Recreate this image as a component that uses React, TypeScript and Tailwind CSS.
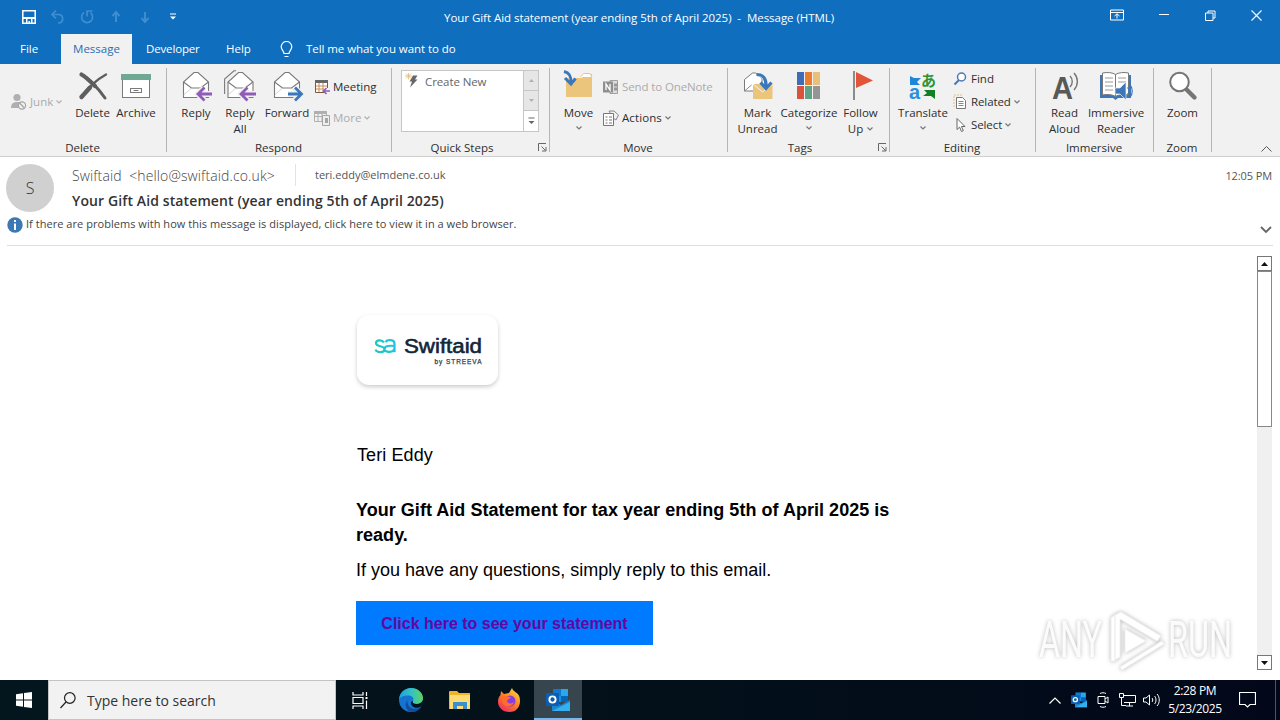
import type { ReactNode } from "react";

function EnvelopeShape() {
  return (
    <g fill="#fff" stroke="#7a7a7a" strokeWidth="1.1">
      <path d="M2.5 12v15.500h25V12L17 2.500h-4z" />
      <path d="M2.500 12l8 6h9l8-6" fill="none" />
      <path d="M10.500 18l-8 7M19.500 18l4 3" fill="none" stroke="#b5b5b5" strokeWidth="0.6" />
    </g>
  );
}

function ReplyIcon() {
  return (
    <svg width="32" height="32" viewBox="0 0 32 32" className="translate-x-px">
      <EnvelopeShape />
      <path d="M30.500 24H17M23 18l-6 6 6 6" fill="none" stroke="#f1f1f1" strokeWidth="6" />
      <path d="M31 24H17M23.500 17.500L17 24l6.500 6.500" fill="none" stroke="#8f5db7" strokeWidth="2.800" />
    </svg>
  );
}

function ReplyAllIcon() {
  return (
    <svg width="32" height="32" viewBox="0 0 32 32">
      <path d="M.6 24V9L10 .8h2" fill="none" stroke="#7a7a7a" strokeWidth="1.1" />
      <g transform="translate(1.500 0)">
        <EnvelopeShape />
      </g>
      <path d="M31 24H17M23 18l-6 6 6 6" fill="none" stroke="#f1f1f1" strokeWidth="6" />
      <path d="M32 24H17M23.500 17.500L17 24l6.500 6.500" fill="none" stroke="#8f5db7" strokeWidth="2.800" />
    </svg>
  );
}

function ForwardIcon() {
  return (
    <svg width="32" height="32" viewBox="0 0 32 32" className="translate-x-px">
      <EnvelopeShape />
      <path d="M16 24h13M23 18l6 6-6 6" fill="none" stroke="#f1f1f1" strokeWidth="6" />
      <path d="M16 24h13.500M23 17.500l6.500 6.500-6.500 6.500" fill="none" stroke="#3a78bb" strokeWidth="2.800" />
    </svg>
  );
}

function DeleteIcon() {
  return (
    <svg width="32" height="32" viewBox="0 0 32 32">
      <path d="M4.500 4.500C12 9 21 18 28 28" fill="none" stroke="#5e5e5e" strokeWidth="3" strokeLinecap="round" />
      <path d="M4.500 4.500C9 7 14 12 18 16" fill="none" stroke="#5e5e5e" strokeWidth="4.200" strokeLinecap="round" />
      <path d="M29 4.500C19 10 11 18 4.500 27" fill="none" stroke="#5e5e5e" strokeWidth="2.400" strokeLinecap="round" />
      <path d="M13 17.500L4.500 27" fill="none" stroke="#5e5e5e" strokeWidth="4.400" strokeLinecap="round" />
    </svg>
  );
}

function ArchiveIcon() {
  return (
    <svg width="32" height="32" viewBox="0 0 32 32">
      <rect x="2.500" y="9.500" width="27" height="18" fill="#fff" stroke="#7a7a7a" />
      <rect x="1" y="4" width="30" height="6" fill="#6fa994" />
      <rect x="10.500" y="18.500" width="11" height="4" fill="#fff" stroke="#7a7a7a" />
      <path d="M13.500 20.500h5" stroke="#7a7a7a" />
    </svg>
  );
}

function MoveIcon() {
  return (
    <svg width="32" height="32" viewBox="0 0 32 32">
      <path d="M3 8h16l3-4h7v23H3z" fill="#ebc57b" />
      <path d="M17.500 7l3-3.500H27L29 7" fill="#fff" stroke="#ebc57b" />
      <path d="M1 .5c5 1 8 4 7.500 13" fill="none" stroke="#f1f1f1" strokeWidth="5" />
      <path d="M1 1.500c5 1 7.500 4 7 12M2 8l6 6 4.500-5.500" fill="none" stroke="#3a78bb" strokeWidth="3" />
    </svg>
  );
}

function MarkUnreadIcon() {
  return (
    <svg width="32" height="32" viewBox="0 0 32 32">
      <path d="M2.500 21V9.500L10.500 3h3L20 8v13z" fill="#fff" stroke="#7a7a7a" />
      <path d="M2.500 21l7-6" stroke="#8a8a8a" fill="none" />
      <rect x="11" y="14" width="19.500" height="15" fill="#ebc57b" />
      <path d="M11 14l9.500 8 10-8" fill="none" stroke="#fff" strokeWidth="0.8" />
      <path d="M15 4c7 0 10 4 9.500 14" fill="none" stroke="#f1f1f1" strokeWidth="5" />
      <path d="M14.500 4.500c7 0 10 4 9.500 13M18.500 12.500l5.500 6 5.500-6" fill="none" stroke="#3a78bb" strokeWidth="3.200" />
    </svg>
  );
}

function CategorizeIcon() {
  return (
    <svg width="32" height="32" viewBox="0 0 32 32">
      <rect x="4" y="2" width="7" height="13" fill="#3e6db5" />
      <rect x="12" y="2" width="7" height="13" fill="#ea7d2f" />
      <rect x="20" y="2" width="7" height="13" fill="#e8c07a" />
      <rect x="4" y="16" width="7" height="13" fill="#d9533c" />
      <rect x="12" y="16" width="7" height="13" fill="#5fa387" />
      <rect x="20" y="16" width="7" height="13" fill="#959595" />
    </svg>
  );
}

function FlagIcon() {
  return (
    <svg width="32" height="32" viewBox="0 0 32 32">
      <path d="M9 1v29" stroke="#808080" strokeWidth="1.800" />
      <path d="M11 2l17 8.500L11 18z" fill="#e2553b" />
    </svg>
  );
}

function TranslateIcon() {
  return (
    <svg width="32" height="32" viewBox="0 0 32 32" className="overflow-visible">
      <path d="M3 6l4 2h7l-4 4 3 3H3z" fill="#1f87d8" />
      <path d="M28 29l-4-3h-8l4-3-3-3h11z" fill="#118023" />
      <text x="2" y="28.500" fontSize="20" fontWeight="700" fill="#2b8fdc" className="font-['Liberation_Sans']">a</text>
      <text x="14" y="15.500" fontSize="15" fontWeight="700" fill="#2f9133" className="font-['Noto_Sans_CJK_JP']">あ</text>
    </svg>
  );
}

function ReadAloudIcon() {
  return (
    <svg width="32" height="32" viewBox="0 0 32 32" className="overflow-visible">
      <text x="3" y="29" fontSize="32" fontWeight="700" fill="#595959" className="font-['Liberation_Sans']" textLength="21" lengthAdjust="spacingAndGlyphs">A</text>
      <path d="M21 6c3 3 3 8 0 11M25 3c4.500 5 4.500 12 0 17" fill="none" stroke="#777" strokeWidth="1.400" />
    </svg>
  );
}

function ReaderIcon() {
  return (
    <svg width="34" height="32" viewBox="0 0 34 32">
      <path d="M1 5h31v23H19l-2.500 2-2.500-2H1z" fill="#3a78bb" />
      <path d="M3.500 3c5-1 10-.5 13 1.500C19.500 2.500 25 2 29.500 3v22c-5-1-10-.5-13 1.500-3-2-8-2.500-13-1.500z" fill="#fff" stroke="#777" />
      <path d="M16.500 4.500v22" stroke="#777" />
      <path d="M6 8h8M6 12h8M6 16h8M6 20h8M19 8h8M19 12h8" stroke="#999" />
      <path d="M16 18h5l6-6v18l-6-6h-5z" fill="#3a78bb" stroke="#f1f1f1" strokeWidth="0.7" />
      <path d="M28.500 17.500c2 2 2 5 0 7M31 15c3 3 3 9 0 12" fill="none" stroke="#3a78bb" strokeWidth="1.200" />
    </svg>
  );
}

function ZoomIcon() {
  return (
    <svg width="32" height="32" viewBox="0 0 32 32">
      <path d="M18.500 18.500l9 9" stroke="#757575" strokeWidth="4.400" strokeLinecap="round" />
      <circle cx="12.500" cy="12" r="9.300" fill="#fff" stroke="#757575" strokeWidth="2" />
    </svg>
  );
}

function Caret({ color = "#777" }: { color?: string }) {
  return (
    <svg width="6" height="4" viewBox="0 0 6 4" className="shrink-0">
      <path d="M.5.5L3 3 5.500.5" fill="none" stroke={color} strokeWidth="1.200" />
    </svg>
  );
}

function Launcher() {
  return (
    <svg width="9" height="9" viewBox="0 0 9 9" className="absolute right-[3px] bottom-1">
      <path d="M.5 8V.5H8M3.500 3.500l4 4M8 4v4H4" fill="none" stroke="#666" />
    </svg>
  );
}

type GroupProps = { label: string; width: string; launcher?: boolean; children: ReactNode };

function Group({ label, width, launcher, children }: GroupProps) {
  return (
    <div className={`relative flex shrink-0 flex-col ${width}`}>
      <div className="flex h-[76px] pt-1.5">{children}</div>
      <div className={`text-center leading-4 ${launcher ? "pr-[18px]" : "pr-0.5"}`}>{label}</div>
      {launcher && <Launcher />}
      <div className="absolute top-1 right-0 h-[84px] w-px bg-[#b5b5b5]" />
    </div>
  );
}

type BigButtonProps = { icon: ReactNode; lines: string[]; width: string; caret?: "below" | "inline" };

function BigButton({ icon, lines, width, caret }: BigButtonProps) {
  return (
    <button className={`flex shrink-0 flex-col items-center ${width}`}>
      <span className="flex h-[35px]">{icon}</span>
      {lines.map((line, i) => (
        <span key={line} className="flex items-center gap-1 leading-4 whitespace-nowrap">
          {line}
          {caret === "inline" && i === lines.length - 1 && <Caret />}
        </span>
      ))}
      {caret === "below" && (
        <span className="mt-[5px]">
          <Caret />
        </span>
      )}
    </button>
  );
}

type SmallButtonProps = { icon: ReactNode; label: string; caret?: boolean; disabled?: boolean; track?: string };

function SmallButton({ icon, label, caret, disabled, track = "" }: SmallButtonProps) {
  return (
    <button className={`flex h-[23px] items-center gap-[3px] whitespace-nowrap ${disabled ? "text-[#ababab]" : ""} ${track}`}>
      {icon}
      <span>{label}</span>
      {caret && <Caret color={disabled ? "#b0b0b0" : "#777"} />}
    </button>
  );
}

function TitleBar() {
  return (
    <div className="flex h-[34px] items-center">
      <div className="flex w-[444px] items-center pl-[22px]">
        <svg width="14" height="14" viewBox="0 0 14 14">
          <path d="M.8.800h12.400v12.400H.8z" fill="none" stroke="#fff" strokeWidth="1.500" />
          <path d="M0 7h14v2H0zM4 9h1.500v5H4zM9 9h1.500v5H9zM6.500 11H8v3H6.500z" fill="#fff" />
        </svg>
        <svg width="16" height="16" viewBox="0 0 16 16" className="ml-[14px]">
          <path d="M6 1.500L2 5.500l4 4M2 5.500h7a4.300 4.300 0 0 1 0 8.500H8" fill="none" stroke="#408ecf" strokeWidth="1.700" />
        </svg>
        <svg width="16" height="16" viewBox="0 0 16 16" className="ml-[13px]">
          <path d="M5 3.500a5.500 5.500 0 1 0 6.500.2M8 7.500V2h5.500" fill="none" stroke="#408ecf" strokeWidth="1.700" />
        </svg>
        <svg width="12" height="16" viewBox="0 0 12 16" className="ml-[15px]">
          <path d="M6 13V3M2.500 7L6 3l3.500 4" fill="none" stroke="#408ecf" strokeWidth="1.900" />
        </svg>
        <svg width="12" height="16" viewBox="0 0 12 16" className="ml-[17px]">
          <path d="M6 3v10M2.500 9L6 13l3.500-4" fill="none" stroke="#408ecf" strokeWidth="1.900" />
        </svg>
        <svg width="8" height="8" viewBox="0 0 8 8" className="ml-[18px]">
          <path d="M1 1h6" stroke="#fff" />
          <path d="M1 3.500h6L4 6.500z" fill="#fff" />
        </svg>
      </div>
      <div className="w-[392px] pt-0.5 tracking-[-0.04px] whitespace-pre text-white">
        {"Your Gift Aid statement (year ending 5th of April 2025)  -  Message (HTML)"}
      </div>
      <div className="ml-auto flex items-center pr-[18px] pb-1">
        <svg width="14" height="12" viewBox="0 0 14 12">
          <path d="M.5 1h13v10H.5zM.5 3.500h13M7 9.500V5M4.500 7L7 4.800 9.500 7" fill="none" stroke="#fff" />
        </svg>
        <svg width="10" height="10" viewBox="0 0 10 10" className="ml-[35px]">
          <path d="M0 4.500h10" stroke="#fff" />
        </svg>
        <svg width="11" height="11" viewBox="0 0 11 11" className="ml-[36px]">
          <path d="M.5 3h7.500v7.500H.5zM3 3V1h7v7H8" fill="none" stroke="#fff" />
        </svg>
        <svg width="11" height="11" viewBox="0 0 11 11" className="ml-[35px]">
          <path d="M.5.5l10 10M10.500.5l-10 10" stroke="#fff" strokeWidth="1.100" />
        </svg>
      </div>
    </div>
  );
}

function TabRow() {
  return (
    <div className="flex h-[30px] items-center text-white">
      <span className="w-[61px] pl-5">File</span>
      <span className="flex h-full w-[71px] items-center justify-center bg-[#f1f1f1] text-[#2b6cb0]">Message</span>
      <span className="w-[94px] pl-3.5 tracking-[-0.15px]">Developer</span>
      <span className="w-[54px]">Help</span>
      <svg width="13" height="17" viewBox="0 0 13 17">
        <path d="M4 12.500C4 10 1.200 9 1.200 5.800a5.300 5.300 0 0 1 10.600 0C11.800 9 9 10 9 12.500zM4.500 15.500h4" fill="none" stroke="#fff" strokeWidth="1.200" />
      </svg>
      <span className="pl-[13px] tracking-[-0.06px]">Tell me what you want to do</span>
    </div>
  );
}

function Ribbon() {
  return (
    <div className="flex h-[93px] border-b border-[#cfcfcf] bg-[#f1f1f1] text-[#2e2e2e]">
      <Group label="Delete" width="w-[167px]">
        <div className="flex w-[70px] pt-5 pl-2.5">
          <SmallButton
            disabled
            caret
            label="Junk"
            icon={
              <svg width="17" height="17" viewBox="0 0 17 17">
                <circle cx="7" cy="4.500" r="3.600" fill="#b0b0b0" />
                <path d="M1 15c0-4 2-6 6-6s4 1 5 2v4z" fill="#b0b0b0" />
                <circle cx="12" cy="12.500" r="3.600" fill="#f1f1f1" stroke="#a5a5a5" strokeWidth="1.200" />
                <path d="M9.500 10l5 5" stroke="#a5a5a5" strokeWidth="1.200" />
              </svg>
            }
          />
        </div>
        <BigButton width="w-[45px]" icon={<DeleteIcon />} lines={["Delete"]} />
        <BigButton width="w-[42px]" icon={<ArchiveIcon />} lines={["Archive"]} />
      </Group>

      <Group label="Respond" width="w-[225px]">
        <div className="w-[7px]" />
        <BigButton width="w-[44px]" icon={<ReplyIcon />} lines={["Reply"]} />
        <BigButton width="w-[44px]" icon={<ReplyAllIcon />} lines={["Reply", "All"]} />
        <BigButton width="w-[50px]" icon={<ForwardIcon />} lines={["Forward"]} />
        <div className="flex flex-col gap-2 pt-[5px] pl-0.5">
          <SmallButton
            label="Meeting"
            icon={
              <svg width="16" height="16" viewBox="0 0 16 16">
                <path d="M1.500 3.500h12v10h-12z" fill="#fff" stroke="#7a5a3a" />
                <path d="M1 1h13v3H1z" fill="#666" />
                <path d="M2 7h11M2 10h8M5 4v9M9 4v9" stroke="#cc8b52" />
                <path d="M10 9h6v7h-6z" fill="#f1f1f1" />
                <path d="M16 12h-6M12.500 9l-3 3 3 3" fill="none" stroke="#8f5db7" strokeWidth="1.600" />
              </svg>
            }
          />
          <SmallButton
            disabled
            caret
            label="More"
            icon={
              <svg width="16" height="16" viewBox="0 0 16 16">
                <path d="M.5 3.500h12v8H.5zM.5 6.500h12M4 3v8M8 3v8" fill="none" stroke="#b0b0b0" />
                <path d="M0 1h13v3H0z" fill="#b0b0b0" />
                <path d="M8.500 5.500h7v10h-7z" fill="#eee" stroke="#a5a5a5" />
                <path d="M11 8h3v5h-3z" fill="#a5a5a5" />
              </svg>
            }
          />
        </div>
      </Group>

      <Group label="Quick Steps" width="w-[158px]" launcher>
        <div className="ml-[9px] flex h-[62px] w-[138px] border border-[#c6c6c6] bg-white">
          <div className="flex grow items-start gap-1.5 pt-0.5 pl-[3px] text-[#666]">
            <svg width="14" height="16" viewBox="0 0 14 16">
              <path d="M8 2.500h4.500L10 6.500h2.500L5 14.500l2-6H4.500z" fill="#666" />
              <path d="M3.500-.5v7M0 3h7M1 .5l5 5M6 .5l-5 5" stroke="#e5b876" strokeWidth="0.8" />
            </svg>
            <span className="tracking-[-0.1px]">Create New</span>
          </div>
          <div className="flex w-[15px] flex-col border-l border-[#c6c6c6]">
            <span className="flex h-5 items-center justify-center border-b border-[#c6c6c6] bg-[#e6e6e6]">
              <svg width="5" height="3" viewBox="0 0 5 3"><path d="M0 3L2.500 0 5 3z" fill="#b0b0b0" /></svg>
            </span>
            <span className="flex h-5 items-center justify-center border-b border-[#c6c6c6] bg-[#e6e6e6]">
              <svg width="5" height="3" viewBox="0 0 5 3"><path d="M0 0l2.500 3L5 0z" fill="#b0b0b0" /></svg>
            </span>
            <span className="flex h-5 items-center justify-center bg-white">
              <svg width="7" height="8" viewBox="0 0 7 8"><path d="M.5.500h6v1h-6zM.5 4h6l-3 3z" fill="#666" /></svg>
            </span>
          </div>
        </div>
      </Group>

      <Group label="Move" width="w-[178px]">
        <BigButton width="w-[57px]" icon={<MoveIcon />} lines={["Move"]} caret="below" />
        <div className="flex flex-col gap-2 pt-[5px]">
          <SmallButton
            disabled
            label="Send to OneNote"
            track="tracking-[-0.12px]"
            icon={
              <svg width="16" height="16" viewBox="0 0 16 16" className="-ml-1">
                <path d="M7 1.500h7.500v13H7z" fill="#ddd" stroke="#a0a0a0" />
                <path d="M11 4.500h4v3h-4zM11 8.500h4v3h-4z" fill="#999" />
                <path d="M0 2.500h10v11H0z" fill="#8f8f8f" />
                <path d="M3 11V5l4 6V5" fill="none" stroke="#fff" strokeWidth="1.300" />
              </svg>
            }
          />
          <SmallButton
            caret
            label="Actions"
            track="tracking-[0.1px]"
            icon={
              <svg width="16" height="16" viewBox="0 0 16 16" className="-ml-1">
                <path d="M6 1h5l4.500 4-2.500 5-3-2z" fill="#f1f1f1" stroke="#888" />
                <path d="M.5 3.500h10v12H.5z" fill="#fff" stroke="#777" />
                <path d="M2.500 7h2M6 7h3M2.500 10h2M6 10h3M2.500 13h2M6 13h3" stroke="#777" />
              </svg>
            }
          />
        </div>
      </Group>

      <Group label="Tags" width="w-[162px]" launcher>
        <div className="w-[7px]" />
        <BigButton width="w-[45px]" icon={<MarkUnreadIcon />} lines={["Mark", "Unread"]} />
        <BigButton width="w-[58px]" icon={<CategorizeIcon />} lines={["Categorize"]} caret="below" />
        <BigButton width="w-[45px]" icon={<FlagIcon />} lines={["Follow", "Up"]} caret="inline" />
      </Group>

      <Group label="Editing" width="w-[146px]">
        <div className="w-[5px]" />
        <BigButton width="w-[56px]" icon={<TranslateIcon />} lines={["Translate"]} caret="below" />
        <div className="-mt-[3px] flex flex-col pl-0.5">
          <SmallButton
            label="Find"
            icon={
              <svg width="15" height="16" viewBox="0 0 15 16">
                <path d="M6 9l-4.500 4.500" stroke="#4a7ab5" strokeWidth="2.200" />
                <circle cx="8.500" cy="6" r="4" fill="#fff" stroke="#4a7ab5" strokeWidth="1.500" />
              </svg>
            }
          />
          <SmallButton
            caret
            label="Related"
            track="tracking-[-0.1px]"
            icon={
              <svg width="15" height="16" viewBox="0 0 15 16">
                <path d="M1 13V1h8" fill="none" stroke="#e8c07a" strokeDasharray="2 1" />
                <path d="M3.500 3.500h6l3 3v8h-9z" fill="#fff" stroke="#777" />
                <path d="M5.500 7.500h5M5.500 9.500h5M5.500 11.500h5" stroke="#888" />
              </svg>
            }
          />
          <SmallButton
            caret
            label="Select"
            track="tracking-[-0.1px]"
            icon={
              <svg width="15" height="16" viewBox="0 0 15 16">
                <path d="M4 1.500v11l2.600-2.400L8.500 14.500l1.800-.8-1.800-4.200H12z" fill="#fff" stroke="#666" />
              </svg>
            }
          />
        </div>
      </Group>

      <Group label="Immersive" width="w-[118px]">
        <BigButton width="w-[57px]" icon={<ReadAloudIcon />} lines={["Read", "Aloud"]} />
        <BigButton width="w-[46px]" icon={<ReaderIcon />} lines={["Immersive", "Reader"]} />
      </Group>

      <Group label="Zoom" width="w-[58px]">
        <BigButton width="w-[57px]" icon={<ZoomIcon />} lines={["Zoom"]} />
      </Group>

      <div className="flex grow items-end justify-end pr-2 pb-1">
        <svg width="11" height="6" viewBox="0 0 11 6">
          <path d="M.5 5.500l5-5 5 5" fill="none" stroke="#555" />
        </svg>
      </div>
    </div>
  );
}

function MessageHeader() {
  return (
    <div className="mr-[7px] ml-[7px] flex h-[89px] flex-col border-b border-[#dedede] text-[#444]">
      <div className="-ml-px flex h-[58px] pt-[7px]">
        <div className="flex size-12 items-center justify-center rounded-full bg-[#d0d0d0] text-base font-light text-[#333]">S</div>
        <div className="ml-[18px] flex flex-col">
          <div className="flex h-[22px] items-center">
            <span className="w-[223px] text-[14px] font-light tracking-[0.12px] whitespace-pre text-[#444]">{"Swiftaid  <hello@swiftaid.co.uk>"}</span>
            <span className="h-[22px] w-px bg-[#e3e3e3]" />
            <span className="pl-[19px] text-[11px] text-[#555]">teri.eddy@elmdene.co.uk</span>
          </div>
          <div className="mt-[5px] text-[14px] leading-5 font-semibold tracking-[0.11px] whitespace-nowrap text-[#333]">
            Your Gift Aid statement (year ending 5th of April 2025)
          </div>
        </div>
        <span className="mt-0.5 mr-px ml-auto text-[11px] leading-5 tracking-[-0.1px] text-[#555]">12:05 PM</span>
      </div>
      <div className="flex h-[19px] items-center gap-[3px] text-[11px] tracking-[0.04px]">
        <svg width="16" height="16" viewBox="0 0 16 16">
          <circle cx="8" cy="8" r="7.700" fill="#3c78b4" />
          <path d="M8 3v2M8 6.500V13" stroke="#fff" strokeWidth="2" />
        </svg>
        <span>If there are problems with how this message is displayed, click here to view it in a web browser.</span>
        <svg width="12" height="8" viewBox="0 0 12 8" className="mt-2.5 mr-px ml-auto">
          <path d="M1 1l5 5 5-5" fill="none" stroke="#666" strokeWidth="1.800" />
        </svg>
      </div>
    </div>
  );
}

function Logo() {
  return (
    <div className="flex h-[70px] w-[141px] items-center justify-center rounded-xl bg-white shadow-[0_2px_4px_rgba(0,0,0,0.2)]">
      <svg width="110" height="34" viewBox="0 0 110 34" className="font-['Liberation_Sans']">
        <defs>
          <linearGradient id="sa" x1="0" x2="1">
            <stop offset="0" stopColor="#1cc8c0" />
            <stop offset="1" stopColor="#22c3e0" />
          </linearGradient>
        </defs>
        <path d="M11 9.500C9 6.500 3 6.800 3 10.300c0 3.900 8.500 2 8.500 5.900 0 3.800-7.500 3.800-9 .4M12.500 9c2-2.800 9-2.600 9 1.500v8.700M21.500 13c-4-.5-10-.5-10 3.200 0 4 10 3.500 10-1.300" fill="none" stroke="url(#sa)" strokeWidth="2.200" />
        <text x="31" y="19.500" fontSize="20" fill="#12263a" stroke="#12263a" strokeWidth="0.600" textLength="78" lengthAdjust="spacingAndGlyphs">Swiftaid</text>
        <text x="61.500" y="30.500" fontSize="6.500" fill="#333f4d" stroke="#333f4d" strokeWidth="0.250" textLength="47">by STREEVA</text>
      </svg>
    </div>
  );
}

function Watermark() {
  return (
    <div className="absolute right-[43px] bottom-[7px] drop-shadow-[0_0_2px_rgba(0,0,0,0.3)]">
      <svg width="200" height="66" viewBox="0 0 200 66" className="font-['Roboto']">
        <g fill="#fff" fillOpacity="0.9">
          <text x="2" y="50" fontSize="50" textLength="63" lengthAdjust="spacingAndGlyphs">ANY</text>
          <text x="131" y="50" fontSize="50" textLength="64" lengthAdjust="spacingAndGlyphs">RUN</text>
        </g>
        <path d="M74 54V11l4-3v46zM84 5l40 24-4 5-37-22v38l-5 3V8zM83 60l42-26 2 3-42 26zM88 22v24l21-12z" fill="#fff" stroke="#f0f0f0" />
      </svg>
    </div>
  );
}

function MessageBody() {
  return (
    <div className="relative flex h-[434px] justify-between pt-2.5 pr-2 pb-2.5 font-['Liberation_Sans',sans-serif] text-black">
      <div className="ml-[356px] flex w-[560px] flex-col items-start text-[18px] leading-[25px]">
        <div className="mt-[59px] ml-px">
          <Logo />
        </div>
        <p className="mt-[58px] ml-px tracking-[0.1px]">Teri Eddy</p>
        <p className="mt-[30px] font-bold tracking-[0.03px] whitespace-nowrap">
          Your Gift Aid Statement for tax year ending 5th of April 2025 is
          <br />
          ready.
        </p>
        <p className="mt-2.5 whitespace-nowrap">If you have any questions, simply reply to this email.</p>
        <a className="mt-[18px] flex h-11 w-[297px] shrink-0 items-center justify-center bg-[#007bff] text-[16px] font-bold whitespace-nowrap text-[#6606a0]">
          Click here to see your statement
        </a>
      </div>
      <div className="flex w-[15px] flex-col bg-[#f0f0f0]">
        <span className="flex h-[15px] shrink-0 items-center justify-center border border-[#777] bg-white">
          <svg width="7" height="4" viewBox="0 0 7 4"><path d="M0 4l3.500-4L7 4z" fill="#111" /></svg>
        </span>
        <span className="h-[156px] shrink-0 border border-[#888] bg-white" />
        <span className="mt-auto flex h-[15px] shrink-0 items-center justify-center border border-[#777] bg-white">
          <svg width="7" height="4" viewBox="0 0 7 4"><path d="M0 0l3.500 4L7 0z" fill="#111" /></svg>
        </span>
      </div>
      <Watermark />
    </div>
  );
}

function OutlookIcon({ size }: { size: number }) {
  return (
    <svg width={size} height={size} viewBox="0 0 24 24">
      <path d="M7 1h15v13H7z" fill="#1490df" />
      <path d="M7 1h8v7H7z" fill="#0f78d4" />
      <path d="M15 1h7v7h-7z" fill="#28a8ea" />
      <path d="M15 8h7v6h-7z" fill="#0364b8" />
      <path d="M6 12l9 5 9-5v11H6z" fill="#1a86d0" />
      <path d="M6 23l18-9v9z" fill="#35b0ee" />
      <rect y="5" width="13" height="13" rx="1" fill="#0a5fb4" />
      <circle cx="6.500" cy="11.500" r="3.100" fill="none" stroke="#fff" strokeWidth="1.900" />
    </svg>
  );
}

function Taskbar() {
  return (
    <div className="flex h-10 items-center bg-linear-to-r from-[#03161e] via-[#031019] to-[#020819] text-white">
      <div className="flex w-12 justify-center">
        <svg width="16" height="16" viewBox="0 0 16 16" fill="#fff">
          <path d="M0 2.200L7 1.200v6.300H0zM8 1l8-1v7.500H8zM0 8.500h7v6.300l-7-1zM8 8.500h8V16l-8-1z" />
        </svg>
      </div>
      <div className="flex h-10 w-72 items-center border border-[#c4c4c4] bg-[#f2f2f2] pl-[11px] text-[#333]">
        <svg width="16" height="17" viewBox="0 0 16 17">
          <circle cx="9.800" cy="6" r="5.300" fill="none" stroke="#222" strokeWidth="1.200" />
          <path d="M6 10l-5.500 6" stroke="#222" strokeWidth="1.200" />
        </svg>
        <span className="pl-[11px] text-[14px]">Type here to search</span>
      </div>
      <div className="flex w-12 justify-center">
        <svg width="17" height="17" viewBox="0 0 17 17" fill="none" stroke="#fff" strokeWidth="1.200">
          <path d="M1 0v3h10V0M1 17v-3h10v3M1 5.500h10v6H1zM14.500 0v4M14.500 8.500V17" />
          <path d="M13.500 6h2" strokeWidth="2" />
        </svg>
      </div>
      <div className="flex w-[53px] justify-center">
        <svg width="24" height="24" viewBox="0 0 24 24">
          <defs>
            <linearGradient id="edge" x1="0" x2="1">
              <stop offset="0" stopColor="#1ea0e5" />
              <stop offset="0.550" stopColor="#36c3bf" />
              <stop offset="1" stopColor="#60d35c" />
            </linearGradient>
          </defs>
          <circle cx="12" cy="12" r="12" fill="#1574cf" />
          <path d="M0 11.500C.5 5 5.500 0 12 0c7 0 12 5 12 10 0 4-3 6-6.500 6-3 0-4.500-1-3.500-3 1.500-3-1-5.500-4.500-5.500C5 7.500 1 9 0 11.500z" fill="url(#edge)" />
          <path d="M8.500 12c-1 5 3 9 7 9 3 0 5-1 7-3-2 4-6 6-10 6-5-1-8-7-4-12z" fill="#104d9c" />
          <path d="M14 13c-1 2 .5 3 3.500 3 3 0 5.500-1.500 6.500-4 .2 3-.5 5-2 6.500-4 2.500-10 1-10-3.500 0-1 .8-2 2-2z" fill="#03131b" />
        </svg>
      </div>
      <div className="flex w-[45px] justify-center">
        <svg width="22" height="20" viewBox="0 0 22 20">
          <path d="M0 2a1 1 0 0 1 1-1h7l2 2h11v16H0z" fill="#f0b429" />
          <path d="M1 5h20v14H1z" fill="#ffdc73" />
          <path d="M4 19v-7h14v7h-4v-3H8v3z" fill="#3b8ed0" />
        </svg>
      </div>
      <div className="flex w-[52px] justify-center pl-0.5">
        <svg width="23" height="24" viewBox="0 0 23 24">
          <defs>
            <linearGradient id="fx" x1="1" y1="0" x2="0.300" y2="1">
              <stop offset="0" stopColor="#ffe54a" />
              <stop offset="0.500" stopColor="#ff8a1f" />
              <stop offset="1" stopColor="#f2305c" />
            </linearGradient>
          </defs>
          <path d="M2.500 7l.5-4 3 3 5-1 3-5c1 4 6 4 7.500 9 2 8-2 15-10 15C4 24 0 19 0 13.500c0-3 1-5 2.500-6.500z" fill="url(#fx)" />
          <circle cx="12" cy="13" r="5.500" fill="#8b3ddb" />
          <path d="M4 8c4-1 6 1 9 1-1 2-4 2-4 4 1 3 5 3 7 1-1 4-5 5-8 4-3-1-5-5-4-10z" fill="#ff6d2a" />
        </svg>
      </div>
      <div className="flex h-10 w-12 items-center justify-center border-b-2 border-[#76b9ed] bg-[#37454e] pt-0.5">
        <OutlookIcon size={24} />
      </div>

      <div className="ml-auto flex items-center">
        <svg width="12" height="7" viewBox="0 0 12 7">
          <path d="M.5 6.500L6 1l5.500 5.500" fill="none" stroke="#fff" strokeWidth="1.200" />
        </svg>
        <span className="ml-2.5">
          <OutlookIcon size={16} />
        </span>
        <svg width="12" height="16" viewBox="0 0 12 16" className="ml-2.5" fill="none" stroke="#fff">
          <path d="M1 4.500h7v7H1zM8 7l3-2v6L8 9M3 1.500c2-1 4-1 6 0M3 14.500c2 1 4 1 6 0" />
        </svg>
        <svg width="17" height="14" viewBox="0 0 17 14" className="ml-[10px]" fill="none" stroke="#fff">
          <path d="M5 2.500h11.500v7H5M10.500 9.500v3.500M7 13h7M.5.500h4v4h-4zM2.500 4.500v8H7" />
        </svg>
        <svg width="17" height="14" viewBox="0 0 17 14" className="ml-[7px]" fill="none" stroke="#fff">
          <path d="M.5 5h2.500l3.500-3v10L3 9H.5zM9 5c1 1 1 3 0 4M11.500 3c2 2 2 6 0 8M14 1c3 3 3 9 0 12" />
        </svg>
        <div className="ml-[5px] w-[60px] text-center text-[12px] leading-[18px] tracking-[-0.35px] whitespace-nowrap">
          <div>2:28 PM</div>
          <div>5/23/2025</div>
        </div>
        <svg width="17" height="16" viewBox="0 0 17 16" className="ml-[14px]">
          <path d="M.5.500h16v12H11l-2.500 2.500L6 12.500H.5z" fill="none" stroke="#fff" strokeWidth="1.200" />
        </svg>
        <span className="ml-[19px] h-10 w-px bg-[#4b5560]" />
        <span className="w-1" />
      </div>
    </div>
  );
}

export default function App() {
  return (
    <div className="h-[720px] w-[1280px] overflow-hidden bg-white font-['Open_Sans',sans-serif] text-[11.5px]">
      <div className="bg-[#106ebe]">
        <TitleBar />
        <TabRow />
      </div>
      <Ribbon />
      <MessageHeader />
      <MessageBody />
      <Taskbar />
    </div>
  );
}
